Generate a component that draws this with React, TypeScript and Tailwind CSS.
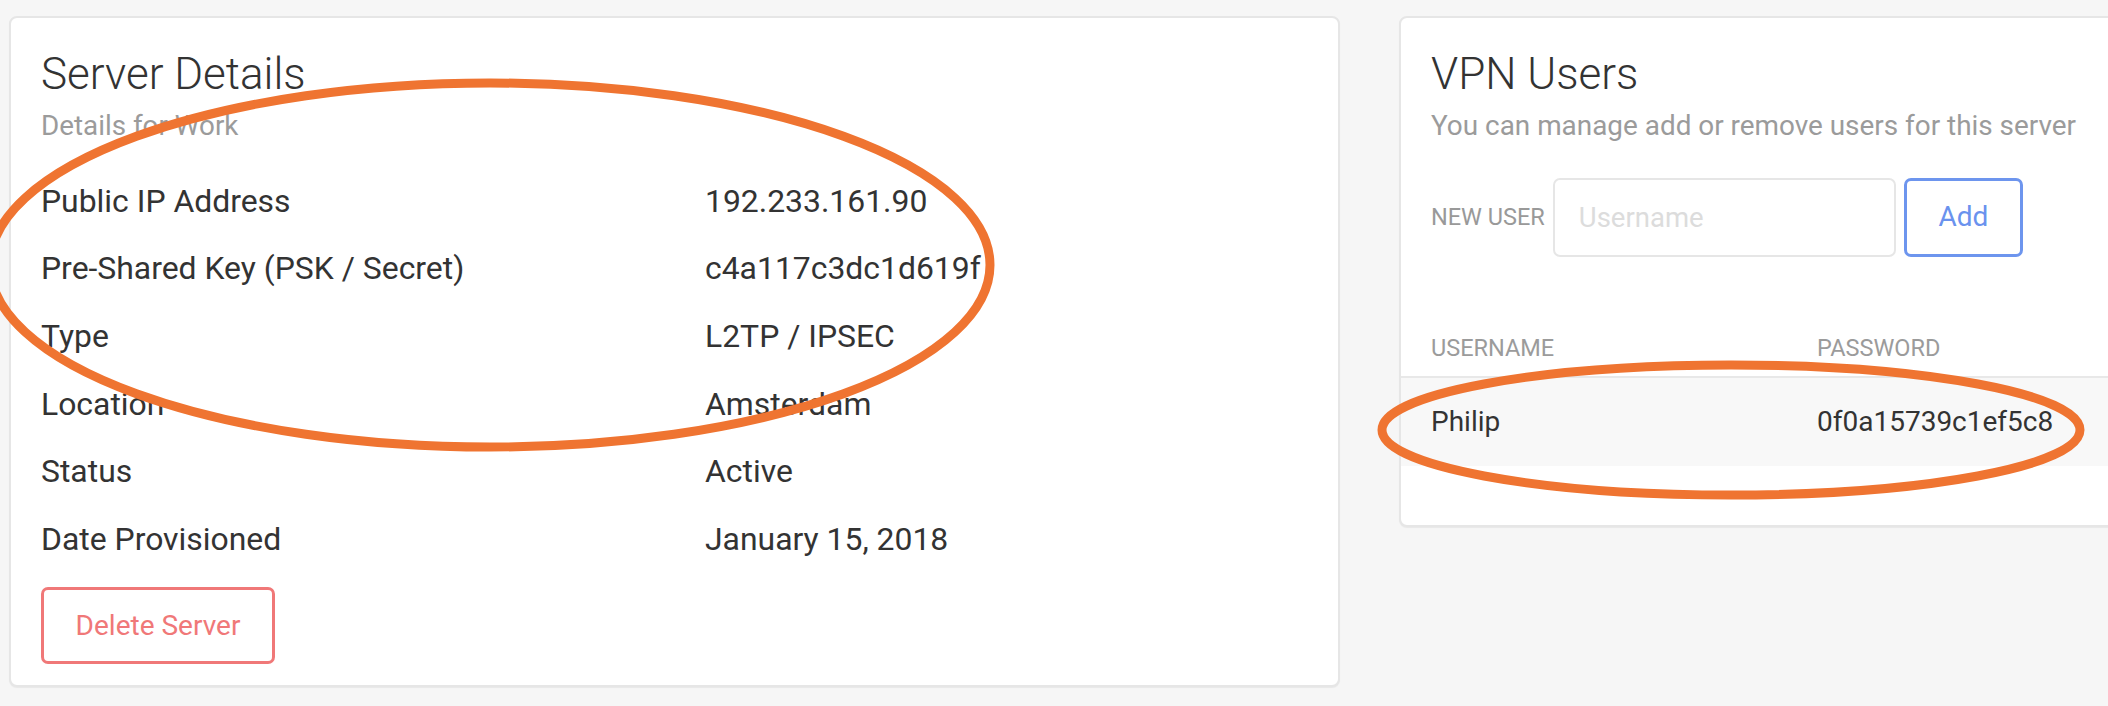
import React from "react";

const rows: [string, string][] = [
  ["Public IP Address", "192.233.161.90"],
  ["Pre-Shared Key (PSK / Secret)", "c4a117c3dc1d619f"],
  ["Type", "L2TP / IPSEC"],
  ["Location", "Amsterdam"],
  ["Status", "Active"],
  ["Date Provisioned", "January 15, 2018"],
];

export default function App() {
  return (
    <div className="relative w-[2108px] h-[706px] overflow-hidden bg-[#f6f6f6] font-[Roboto,'Liberation_Sans',sans-serif] text-[#333]">
      <div className="flex items-start pl-[9px] pt-[16px] gap-[59px]">
        {/* Server Details card */}
        <div className="w-[1331px] shrink-0 bg-white border-2 border-[#e6e6e6] rounded-[8px] shadow-[0_1px_1px_rgba(0,0,0,0.06)] pl-[30px] pr-[30px] pt-[30px] pb-[21px]">
          <h2 className="text-[44px] leading-[52px] font-light text-[#333]">Server Details</h2>
          <p className="mt-[8.6px] text-[27.8px] leading-[34px] text-[#9b9b9b]">Details for Work</p>
          <div className="mt-[25px]">
            {rows.map(([k, v]) => (
              <div key={k} className="grid grid-cols-[664px_1fr] h-[67.7px] items-center text-[31.9px] leading-[67.7px] text-[#333]">
                <span>{k}</span>
                <span>{v}</span>
              </div>
            ))}
          </div>
          <button className="mt-[13.4px] w-[234px] h-[77px] border-[3px] border-[#f07878] rounded-[7px] text-[28px] text-[#f07878] bg-white">
            Delete Server
          </button>
        </div>

        {/* VPN Users card */}
        <div className="w-[760px] shrink-0 bg-white border-2 border-[#e6e6e6] rounded-[8px] shadow-[0_1px_1px_rgba(0,0,0,0.06)] pt-[30px] pb-[59px]">
          <div className="px-[30px]">
            <h2 className="text-[44px] leading-[52px] font-light text-[#333]">VPN Users</h2>
            <p className="mt-[8.6px] text-[27.9px] leading-[34px] text-[#9b9b9b] whitespace-nowrap">
              You can manage add or remove users for this server
            </p>
            <div className="mt-[35.4px] flex items-center gap-[8px]">
              <span className="text-[23.5px] text-[#999] whitespace-nowrap">NEW USER</span>
              <input
                placeholder="Username"
                className="w-[343px] h-[79px] border-2 border-[#e6e6e6] rounded-[7px] pl-[24px] text-[27.5px] outline-none placeholder:text-[#dcdcdc]"
              />
              <button className="w-[119px] h-[79px] border-[3px] border-[#6d95ee] rounded-[7px] text-[28px] text-[#6a92ee] bg-white">
                Add
              </button>
            </div>
          </div>
          <div className="mt-[76px]">
            <div className="grid grid-cols-[386px_1fr] pl-[30px] pb-[13px] border-b-2 border-[#e8e8e8] text-[23.5px] leading-[30px] text-[#9b9b9b]">
              <span>USERNAME</span>
              <span>PASSWORD</span>
            </div>
            <div className="grid grid-cols-[386px_1fr] pl-[30px] h-[88px] items-center bg-[#f8f8f8] text-[28px] leading-[88px] text-[#333]">
              <span>Philip</span>
              <span>0f0a15739c1ef5c8</span>
            </div>
          </div>
        </div>
      </div>

      {/* annotation overlay */}
      <svg className="absolute left-0 top-0 pointer-events-none" width="2108" height="706">
        <ellipse cx="490" cy="265" rx="500" ry="182" fill="none" stroke="#ef7431" strokeWidth="9" />
        <ellipse cx="1731" cy="430" rx="349" ry="65" fill="none" stroke="#ef7431" strokeWidth="9" />
      </svg>
    </div>
  );
}
